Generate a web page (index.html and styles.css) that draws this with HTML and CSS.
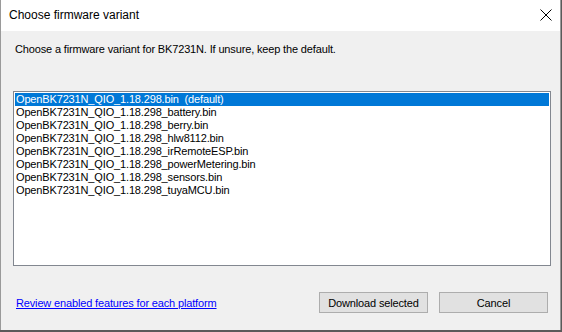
FILE: index.html
```html
<!DOCTYPE html>
<html>
<head>
<meta charset="utf-8">
<link rel="stylesheet" href="styles.css">
</head>
<body>
<div class="window">
  <div class="titlebar">
    <span class="title">Choose firmware variant</span>
    <svg class="close" width="12" height="12" viewBox="0 0 12 12"><path d="M0.5 0.5 L11.5 11.5 M11.5 0.5 L0.5 11.5" stroke="#000" stroke-width="1" fill="none"/></svg>
  </div>
  <div class="content">
    <p class="prompt">Choose a firmware variant for BK7231N. If unsure, keep the default.</p>
    <div class="listbox">
      <div class="item selected">OpenBK7231N_QIO_1.18.298.bin&nbsp; (default)</div>
      <div class="item">OpenBK7231N_QIO_1.18.298_battery.bin</div>
      <div class="item">OpenBK7231N_QIO_1.18.298_berry.bin</div>
      <div class="item">OpenBK7231N_QIO_1.18.298_hlw8112.bin</div>
      <div class="item">OpenBK7231N_QIO_1.18.298_irRemoteESP.bin</div>
      <div class="item">OpenBK7231N_QIO_1.18.298_powerMetering.bin</div>
      <div class="item">OpenBK7231N_QIO_1.18.298_sensors.bin</div>
      <div class="item">OpenBK7231N_QIO_1.18.298_tuyaMCU.bin</div>
    </div>
    <div class="footer">
      <a class="link" href="#">Review enabled features for each platform</a>
      <div class="buttons">
        <button class="btn">Download selected</button>
        <button class="btn">Cancel</button>
      </div>
    </div>
  </div>
</div>
</body>
</html>
```
FILE: styles.css
```css
html, body {
  margin: 0;
  padding: 0;
  background: #5a5a5a;
}
body {
  width: 562px;
  height: 332px;
  overflow: hidden;
  font-family: "Liberation Sans", Arial, sans-serif;
  font-size: 11px;
  letter-spacing: -0.15px;
}
.window {
  width: 559px;
  height: 330px;
  border-left: 1px solid #9a9a9a;
  border-right: 1px solid #9a9a9a;
  background: #f0f0f0;
  display: flex;
  flex-direction: column;
}
.titlebar {
  height: 31px;
  background: #fff;
  display: flex;
  align-items: center;
  justify-content: space-between;
  padding: 0 8px 0 8px;
  box-sizing: border-box;
}
.title {
  font-size: 12px;
  letter-spacing: 0;
  color: #000;
  margin-top: -1px;
}
.close {
  margin-top: -1px;
}
.content {
  flex: 1;
  display: flex;
  flex-direction: column;
  padding: 0 12px 0 12px;
}
.prompt {
  margin: 11px 0 0 2px;
  line-height: 14px;
  color: #000;
}
.listbox {
  margin-top: 35px;
  height: 171px;
  width: 534px;
  border: 1px solid #828790;
  background: #fff;
  padding: 1px;
  box-sizing: content-box;
}
.item {
  height: 13px;
  line-height: 13px;
  padding-left: 1px;
  color: #000;
  white-space: pre;
}
.item.selected {
  background: #0078d7;
  color: #fff;
}
.footer {
  margin-top: 26px;
  display: flex;
  align-items: center;
  justify-content: space-between;
  padding-left: 3px;
}
.link {
  color: #0000ff;
  text-decoration: underline;
  margin-top: 1px;
}
.buttons {
  display: flex;
  gap: 11px;
}
.btn {
  width: 109px;
  height: 21px;
  background: #e1e1e1;
  border: 1px solid #adadad;
  font-family: "Liberation Sans", Arial, sans-serif;
  font-size: 11px;
  letter-spacing: -0.15px;
  color: #000;
  padding: 0;
  margin: 0;
}
```
